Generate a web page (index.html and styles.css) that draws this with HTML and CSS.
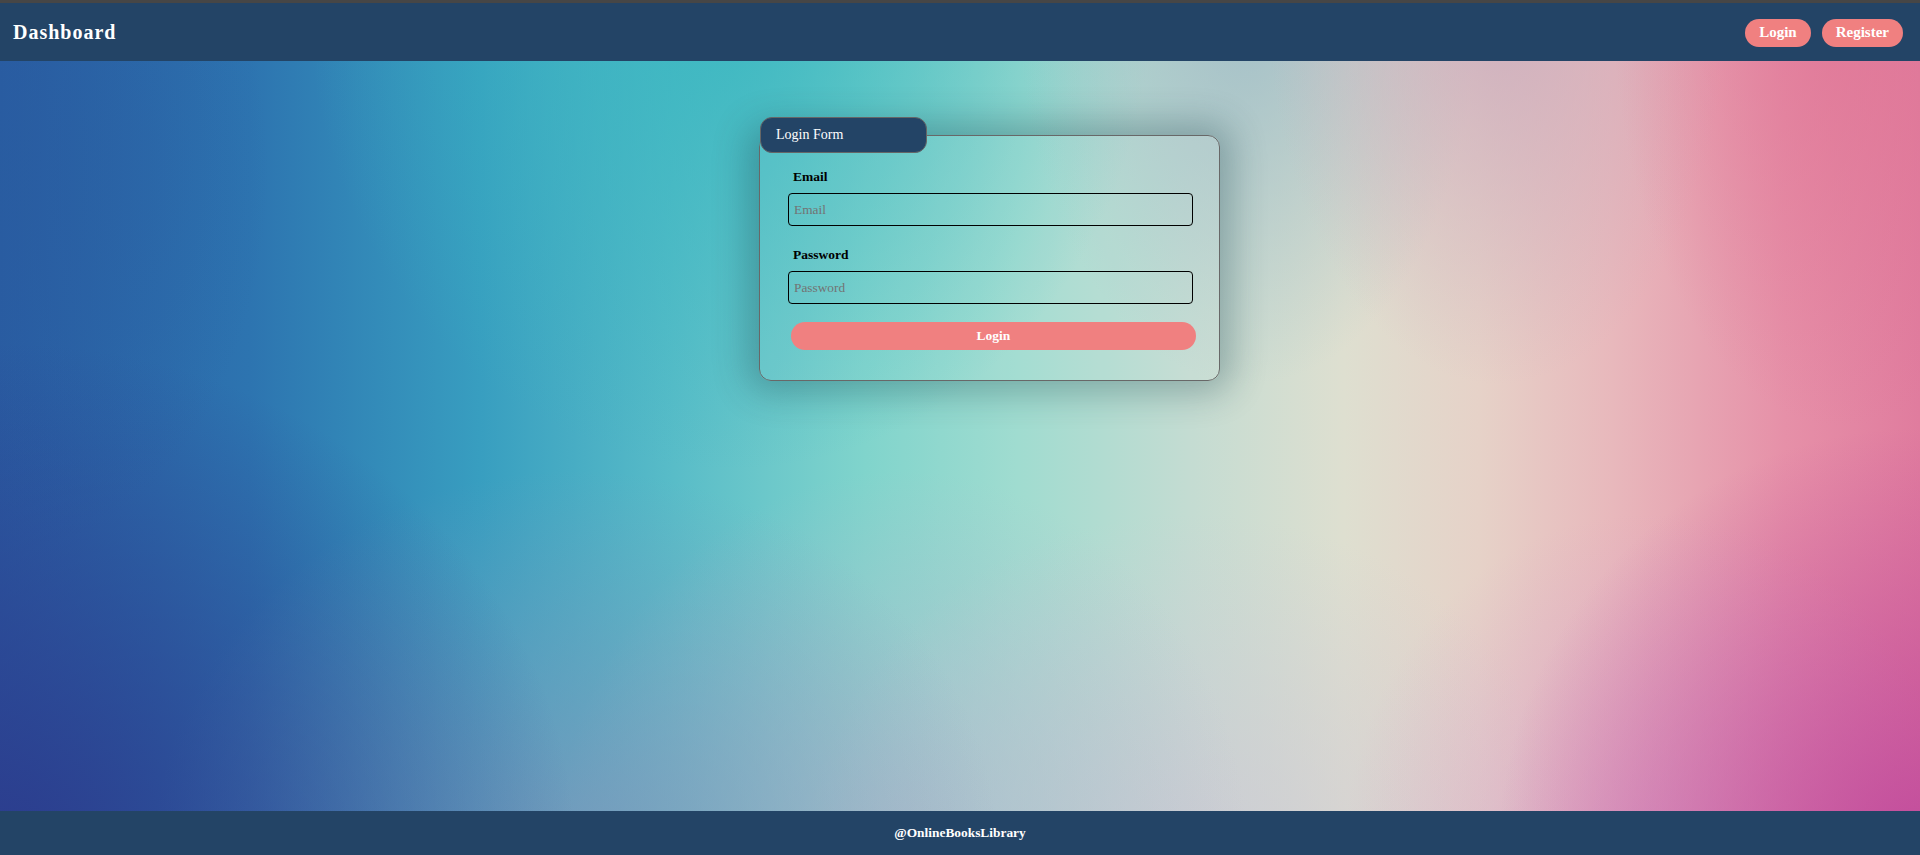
FILE: index.html
```html
<!DOCTYPE html>
<html lang="en">
<head>
<meta charset="utf-8">
<title>Dashboard</title>
<link rel="stylesheet" href="styles.css">
</head>
<body>
<header class="topbar">
  <h1 class="brand">Dashboard</h1>
  <nav class="auth-links">
    <a class="pill-btn" href="#">Login</a>
    <a class="pill-btn" href="#">Register</a>
  </nav>
</header>
<main class="stage">
  <form class="login-form" onsubmit="return false;">
    <fieldset class="login-card">
      <legend class="card-tab">Login Form</legend>
      <div class="card-body">
        <div class="field">
          <label class="field-label" for="email">Email</label>
          <input class="field-input" id="email" type="email" placeholder="Email">
        </div>
        <div class="field field-password">
          <label class="field-label" for="password">Password</label>
          <input class="field-input" id="password" type="password" placeholder="Password">
        </div>
        <button class="submit-btn" type="submit">Login</button>
      </div>
    </fieldset>
  </form>
</main>
<footer class="site-footer">@OnlineBooksLibrary</footer>
</body>
</html>
```
FILE: styles.css
```css
html, body {
  margin: 0;
  height: 100%;
}

body {
  display: flex;
  flex-direction: column;
  height: 100vh;
  overflow: hidden;
  font-family: "Liberation Serif", "Times New Roman", serif;
  background:
    radial-gradient(ellipse 30% 60% at 0% 100%, rgba(44, 58, 140, 0.95), rgba(44, 58, 140, 0)),
    radial-gradient(ellipse 22% 50% at 100% 100%, rgba(192, 72, 156, 0.95), rgba(192, 72, 156, 0)),
    radial-gradient(ellipse 16% 40% at 86% 100%, rgba(214, 156, 200, 0.7), rgba(214, 156, 200, 0)),
    radial-gradient(ellipse 22% 45% at 30% 100%, rgba(128, 150, 186, 0.8), rgba(128, 150, 186, 0)),
    radial-gradient(ellipse 18% 45% at 47% 100%, rgba(176, 186, 204, 0.85), rgba(176, 186, 204, 0)),
    radial-gradient(ellipse 20% 40% at 62% 100%, rgba(206, 200, 212, 0.8), rgba(206, 200, 212, 0)),
    radial-gradient(ellipse 12% 50% at 96% 0%, rgba(224, 118, 150, 0.8), rgba(224, 118, 150, 0)),
    radial-gradient(ellipse 12% 45% at 78% 0%, rgba(202, 170, 188, 0.85), rgba(202, 170, 188, 0)),
    radial-gradient(ellipse 12% 45% at 65% 0%, rgba(158, 188, 198, 0.9), rgba(158, 188, 198, 0)),
    radial-gradient(ellipse 22% 55% at 38% 0%, rgba(54, 182, 192, 0.85), rgba(54, 182, 192, 0)),
    radial-gradient(ellipse 14% 45% at 0% 20%, rgba(40, 92, 160, 0.6), rgba(40, 92, 160, 0)),
    linear-gradient(to right, #2a5ca2 0%, #2d74b0 13%, #389ec0 25%, #58bcc8 35%, #80d4cc 45%, #a0dcd0 53%, #c4dcd2 62%, #dedfd0 70%, #e6d2c8 77%, #e8b8bc 84%, #e690a8 93%, #e07c9e 100%);
}

.topbar {
  flex-shrink: 0;
  height: 58px;
  border-top: 3px solid #464646;
  background: #234466;
  display: flex;
  align-items: center;
  justify-content: space-between;
  padding: 0 17px 0 13px;
}

.brand {
  margin: 0;
  font-size: 20px;
  font-weight: bold;
  letter-spacing: 1px;
  color: #ffffff;
}

.auth-links {
  display: flex;
  gap: 11px;
  margin-top: 1px;
}

.pill-btn {
  display: flex;
  align-items: center;
  height: 28px;
  padding: 0 14px;
  border-radius: 14px;
  background: #f08080;
  color: #ffffff;
  font-size: 15px;
  font-weight: bold;
  text-decoration: none;
}

.stage {
  flex: 1;
  display: flex;
  justify-content: center;
  align-items: flex-start;
  padding-top: 56px;
  padding-left: 59px;
}

.login-form {
  margin: 0;
}

.login-card {
  width: 461px;
  min-width: 0;
  box-sizing: border-box;
  margin: 0;
  padding: 0;
  border: 1px solid #686868;
  border-radius: 12px;
  background: rgba(255, 255, 255, 0.05);
  box-shadow: 0 0 34px 12px rgba(20, 60, 70, 0.3);
}

.card-tab {
  width: 167px;
  box-sizing: border-box;
  padding: 9px 15px;
  line-height: 16px;
  font-size: 14px;
  color: #ffffff;
  background: #234466;
  border: 1px solid #666666;
  border-radius: 12px;
}

.card-body {
  display: flex;
  flex-direction: column;
  align-items: flex-start;
  padding: 16px 26px 30px 28px;
}

.field {
  display: flex;
  flex-direction: column;
  align-items: flex-start;
}

.field-password {
  margin-top: 21px;
}

.field-label {
  margin-left: 5px;
  margin-bottom: 8px;
  font-size: 13.5px;
  line-height: 16px;
  font-weight: bold;
  color: #000000;
}

.field-input {
  width: 405px;
  height: 33px;
  box-sizing: border-box;
  margin: 0;
  padding: 0 5px;
  border: 1px solid #000000;
  border-radius: 4px;
  background: transparent;
  font-family: inherit;
  font-size: 13.33px;
  color: #000000;
  outline: none;
}

.field-input::placeholder {
  color: #737373;
}

.submit-btn {
  width: 405px;
  height: 28px;
  margin: 18px 0 0 3px;
  padding: 0;
  border: none;
  border-radius: 14px;
  background: #f08080;
  color: #ffffff;
  font-family: inherit;
  font-size: 13.5px;
  font-weight: bold;
  cursor: pointer;
}

.site-footer {
  flex-shrink: 0;
  height: 44px;
  display: flex;
  align-items: center;
  justify-content: center;
  background: #234466;
  color: #ffffff;
  font-size: 13.4px;
  font-weight: bold;
}
```
